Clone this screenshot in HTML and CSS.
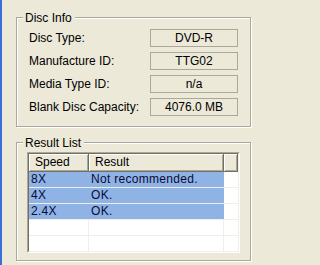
FILE: index.html
```html
<!DOCTYPE html>
<html>
<head>
<meta charset="utf-8">
<link rel="stylesheet" href="styles.css">
</head>
<body>
<div class="window">
  <div class="group info">
    <span class="group-title">Disc Info</span>
    <div class="row"><span class="label">Disc Type:</span><span class="value">DVD-R</span></div>
    <div class="row"><span class="label">Manufacture ID:</span><span class="value">TTG02</span></div>
    <div class="row"><span class="label">Media Type ID:</span><span class="value">n/a</span></div>
    <div class="row"><span class="label">Blank Disc Capacity:</span><span class="value">4076.0 MB</span></div>
  </div>
  <div class="group results">
    <span class="group-title">Result List</span>
    <div class="list">
      <div class="list-body">
        <div class="list-head">
          <div class="th c1">Speed</div>
          <div class="th c2">Result</div>
          <div class="th c3"></div>
        </div>
        <div class="list-row sel"><div class="td c1">8X</div><div class="td c2">Not recommended.</div><div class="td c3"></div></div>
        <div class="list-row sel"><div class="td c1">4X</div><div class="td c2">OK.</div><div class="td c3"></div></div>
        <div class="list-row sel"><div class="td c1">2.4X</div><div class="td c2">OK.</div><div class="td c3"></div></div>
        <div class="list-row"><div class="td c1"></div><div class="td c2"></div><div class="td c3"></div></div>
        <div class="list-row"><div class="td c1"></div><div class="td c2"></div><div class="td c3"></div></div>
      </div>
    </div>
  </div>
</div>
</body>
</html>
```

FILE: styles.css
```css
html, body {
  margin: 0;
  padding: 0;
}
body {
  background: #ECE9D8;
  font-family: "Liberation Sans", Arial, sans-serif;
  font-size: 12px;
  color: #000;
  overflow: hidden;
}
.window {
  height: 265px;
  box-sizing: border-box;
  border-left: 2px solid #3d6fd6;
  padding: 17px 0 0 14px;
  display: flex;
  flex-direction: column;
}
.group {
  position: relative;
  width: 235px;
  box-sizing: border-box;
  border: 1px solid #ACA899;
  box-shadow: inset 1px 1px 0 #fff, 1px 1px 0 #fff;
}
.group-title {
  position: absolute;
  top: -7px;
  left: 6px;
  padding: 0 3px 0 2px;
  line-height: 14px;
  background: #ECE9D8;
}
.info {
  height: 110px;
  padding: 11px 0 0 12px;
  display: flex;
  flex-direction: column;
  gap: 5px;
}
.row {
  display: flex;
  align-items: center;
  height: 18px;
}
.label {
  width: 121px;
  flex: none;
}
.value {
  width: 88px;
  height: 18px;
  box-sizing: border-box;
  border: 1px solid #ACA899;
  text-align: center;
  line-height: 16px;
}
.results {
  margin-top: 15px;
  height: 119px;
  padding: 9px 0 0 10px;
}
.list {
  width: 213px;
  height: 101px;
  box-sizing: border-box;
  border: 1px solid;
  border-color: #ACA899 #fff #fff #ACA899;
}
.list-body {
  height: 100%;
  box-sizing: border-box;
  border: 1px solid;
  border-color: #716F64 #F1EFE2 #F1EFE2 #716F64;
  background: #fff;
  overflow: hidden;
}
.list-head {
  display: flex;
  height: 18px;
}
.th {
  height: 18px;
  box-sizing: border-box;
  background: #ECE9D8;
  border-right: 1px solid #716F64;
  border-bottom: 1px solid #716F64;
  box-shadow: inset 1px 1px 0 #fff, inset -1px -1px 0 #ACA899;
  padding-left: 6px;
  line-height: 17px;
  white-space: nowrap;
}
.c1 { width: 60px; flex: none; }
.c2 { width: 135px; flex: none; }
.c3 { flex: 1; }
.list-row {
  display: flex;
  height: 16px;
  box-sizing: border-box;
  border-bottom: 1px solid #EFEEE8;
}
.td {
  box-sizing: border-box;
  border-right: 1px solid #EFEEE8;
  padding-left: 2px;
  line-height: 15px;
  white-space: nowrap;
  letter-spacing: 0.3px;
}
.td.c3 { border-right: none; }
.sel .c1, .sel .c2 {
  background: #8FB3E4;
  color: #0a0a3a;
  border-right-color: #8FB3E4;
}
```
